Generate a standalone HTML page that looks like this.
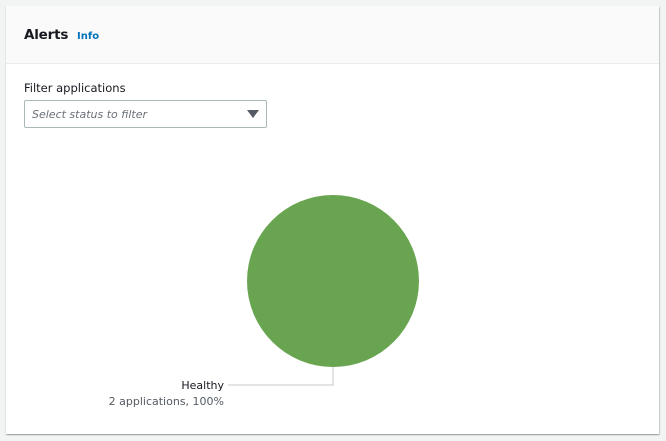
<!DOCTYPE html>
<html><head><style>
body{margin:0;width:666px;height:441px;background:#f2f3f3;font-family:"DejaVu Sans","Liberation Sans",sans-serif;overflow:hidden;position:relative}
.card{position:absolute;left:6px;top:6px;width:653px;height:428px;background:#fff;box-shadow:0 1px 1px rgba(0,28,36,.3),1px 1px 1px rgba(0,28,36,.15);}
.hd{height:57px;background:#fafafa;border-bottom:1px solid #eaeded;position:relative}
.t{position:absolute;left:18px;top:21px;font-size:13.5px;font-weight:bold;color:#16191f;letter-spacing:-0.2px}
.i{position:absolute;left:71px;top:25px;font-size:10px;font-weight:bold;color:#0073bb}
.lb{position:absolute;left:18px;top:75px;font-size:11.5px;color:#16191f}
.sel{position:absolute;left:18px;top:94px;width:241px;height:26px;border:1px solid #aab7b8;border-radius:2px}
.sel span{position:absolute;left:7px;top:7px;font-size:11px;font-style:italic;color:#687078}
.tri{position:absolute;right:7px;top:9px;width:0;height:0;border-left:6px solid transparent;border-right:6px solid transparent;border-top:8px solid #545b64}
</style></head><body>
<div class="card">
<div class="hd"><div class="t">Alerts</div><div class="i">Info</div></div>
<div class="lb">Filter applications</div>
<div class="sel"><span>Select status to filter</span><div class="tri"></div></div>
</div>
<svg width="666" height="441" style="position:absolute;left:0;top:0">
<circle cx="333" cy="281" r="86" fill="#69a551"/>
<polyline points="228,385 333,385 333,367" fill="none" stroke="#c9c9c9" stroke-width="1"/>
<text x="224" y="389" text-anchor="end" font-size="11" fill="#16191f" font-family="DejaVu Sans, sans-serif">Healthy</text>
<text x="224" y="405" text-anchor="end" font-size="11" fill="#545b64" font-family="DejaVu Sans, sans-serif">2 applications, 100%</text>
</svg>
</body></html>
